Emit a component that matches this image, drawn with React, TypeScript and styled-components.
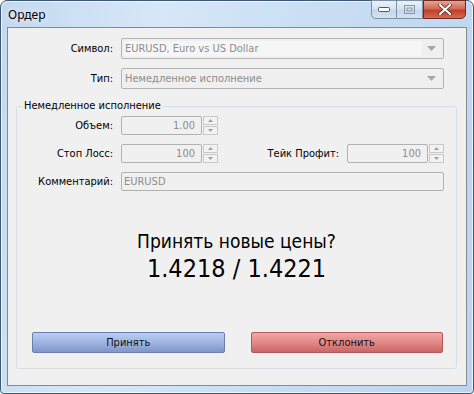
import React from 'react';
import styled, { createGlobalStyle } from 'styled-components';

const Global = createGlobalStyle`
  html, body { margin: 0; padding: 0; background: #fff; }
  body { width: 474px; height: 394px; overflow: hidden; }
`;

const uiFont = `"DejaVu Sans Condensed", "DejaVu Sans", sans-serif`;

const Window = styled.div`
  box-sizing: border-box;
  width: 474px;
  height: 394px;
  display: flex;
  flex-direction: column;
  border: 1px solid #3d5770;
  border-radius: 7px 7px 4px 4px;
  background: linear-gradient(100deg, #c4d9ef 0%, #d6e7f8 30%, #c9def3 60%, #bcd4ee 100%);
  box-shadow: inset 0 0 0 1px rgba(255,255,255,0.65);
  padding: 0 6px 7px 6px;
`;

const TitleBar = styled.div`
  height: 26px;
  display: flex;
  align-items: flex-start;
  justify-content: space-between;
`;

const Title = styled.div`
  font-family: "Noto Sans", "Open Sans", sans-serif;
  font-size: 12px;
  color: #000;
  padding: 5px 0 0 1px;
  text-shadow: 0 0 6px rgba(255,255,255,0.9);
`;

const Caption = styled.div`
  display: flex;
  margin-right: 1px;
  margin-top: -1px;
`;

const CapBtn = styled.div<{ $close?: boolean; $first?: boolean }>`
  box-sizing: border-box;
  height: 19px;
  width: ${p => (p.$close ? '43px' : '26px')};
  display: flex;
  align-items: center;
  justify-content: center;
  border: 1px solid ${p => (p.$close ? '#6b2a23' : '#7d8fa3')};
  border-left-width: ${p => (p.$first || p.$close ? '1px' : '0')};
  border-radius: ${p => (p.$close ? '0 0 5px 0' : p.$first ? '0 0 0 5px' : '0')};
  background: ${p =>
    p.$close
      ? 'linear-gradient(#e8a493 0%, #d26a55 45%, #c1402a 55%, #d56a4f 100%)'
      : 'linear-gradient(#e9f1fa 0%, #d6e4f3 45%, #c4d6ea 55%, #d4e3f2 100%)'};
`;

const Client = styled.div`
  flex: 1;
  display: flex;
  flex-direction: column;
  border: 1px solid #848a92;
  background: #f0f0f0;
  padding: 10px 22px 16px 0;
  font-family: ${uiFont};
  font-size: 11px;
  color: #000;
`;

const Row = styled.div<{ $label: number }>`
  display: grid;
  grid-template-columns: ${p => p.$label}px 1fr;
  column-gap: 8px;
  align-items: center;
  margin-bottom: 9px;
`;

const Label = styled.div`
  text-align: right;
  white-space: nowrap;
`;

const Combo = styled.div`
  box-sizing: border-box;
  height: 21px;
  border: 1px solid #b4b4b4;
  border-radius: 2px;
  background: #efefef;
  display: flex;
  align-items: center;
  padding: 2px;
`;

const ComboText = styled.div<{ $hl?: boolean }>`
  flex: 1;
  height: 100%;
  display: flex;
  align-items: center;
  padding-left: 1px;
  color: #8d8d8d;
  background: ${p => (p.$hl ? '#f6f6f6' : 'transparent')};
`;

const Arrow = styled.div`
  width: 19px;
  display: flex;
  justify-content: center;
`;

const Group = styled.div`
  position: relative;
  margin: 8px -13px 0 8px;
  flex: 1;
  display: flex;
  flex-direction: column;
  border: 1px solid #d5dfe5;
  border-radius: 3px;
  padding: 9px 12px 15px 0;
`;

const Legend = styled.div`
  position: absolute;
  top: -8px;
  left: 6px;
  padding: 0 2px 0 1px;
  background: #f0f0f0;
`;

const Fields = styled.div`
  display: flex;
  flex-direction: column;
`;

const Pair = styled.div`
  display: flex;
  align-items: center;
`;

const Input = styled.div<{ $w?: number; $right?: boolean }>`
  box-sizing: border-box;
  height: 19px;
  width: ${p => (p.$w ? `${p.$w}px` : 'auto')};
  flex: ${p => (p.$w ? 'none' : '1')};
  border: 1px solid #b1b1b1;
  border-radius: 2px;
  background: #f0f0f0;
  color: #8d8d8d;
  display: flex;
  align-items: center;
  justify-content: ${p => (p.$right ? 'flex-end' : 'flex-start')};
  padding: 0 6px 0 2px;
`;

const Spin = styled.div`
  display: flex;
  flex-direction: column;
  margin-left: 1px;
`;

const SpinBtn = styled.div`
  box-sizing: border-box;
  width: 15px;
  height: 9px;
  border: 1px solid #c9c9c9;
  background: #f2f2f2;
  display: flex;
  align-items: center;
  justify-content: center;
  & + & { margin-top: 1px; }
`;

const Message = styled.div`
  margin-top: 29px;
  padding-left: 12px;
  display: flex;
  flex-direction: column;
  align-items: center;
  font-family: "DejaVu Sans Condensed", "DejaVu Sans", sans-serif;
`;

const Question = styled.div`
  font-size: 19px;
  line-height: 24px;
`;

const Prices = styled.div`
  font-size: 25px;
  line-height: 32px;
`;

const Buttons = styled.div`
  margin-top: auto;
  display: grid;
  grid-template-columns: 1fr 1fr;
  column-gap: 26px;
  padding: 0 1px 0 15px;
`;

const Btn = styled.div<{ $tone: 'blue' | 'red' }>`
  box-sizing: border-box;
  height: 21px;
  display: flex;
  align-items: center;
  justify-content: center;
  border-radius: 2px;
  border: 1px solid ${p => (p.$tone === 'blue' ? '#6c7fae' : '#b25a5a')};
  background: ${p =>
    p.$tone === 'blue'
      ? 'linear-gradient(#b8cdf5 0%, #9fb4e2 50%, #7f96c6 100%)'
      : 'linear-gradient(#f6a5a5 0%, #e28888 50%, #c96767 100%)'};
  color: #111;
`;

const TriDown = ({ c = '#a7a7a7' }: { c?: string }) => (
  <svg width="9" height="5" viewBox="0 0 9 5"><path d="M0 0h9L4.5 5z" fill={c} /></svg>
);

const SmallTri = ({ up }: { up?: boolean }) => (
  <svg width="5" height="3" viewBox="0 0 5 3">
    <path d={up ? 'M0 3h5L2.5 0z' : 'M0 0h5L2.5 3z'} fill="#a0a0a0" />
  </svg>
);

const Spinner = () => (
  <Spin>
    <SpinBtn><SmallTri up /></SpinBtn>
    <SpinBtn><SmallTri /></SpinBtn>
  </Spin>
);

export default function App() {
  return (
    <>
      <Global />
      <Window>
        <TitleBar>
          <Title>Ордер</Title>
          <Caption>
            <CapBtn $first>
              <svg width="12" height="5" viewBox="0 0 12 5">
                <rect x="0.5" y="0.5" width="11" height="4" fill="#fff" stroke="#4a5a6e" rx="1" />
              </svg>
            </CapBtn>
            <CapBtn>
              <svg width="11" height="9" viewBox="0 0 11 9">
                <rect x="0.5" y="0.5" width="10" height="8" fill="none" stroke="#8a96a6" />
                <rect x="3" y="3" width="5" height="3" fill="none" stroke="#8a96a6" />
              </svg>
            </CapBtn>
            <CapBtn $close>
              <svg width="14" height="11" viewBox="0 0 14 11">
                <path d="M2 1l10 9M12 1L2 10" stroke="#5a2018" strokeWidth="3.6" strokeLinecap="round" />
                <path d="M2 1l10 9M12 1L2 10" stroke="#fff" strokeWidth="2.2" strokeLinecap="round" />
              </svg>
            </CapBtn>
          </Caption>
        </TitleBar>
        <Client>
          <Row $label={105}>
            <Label>Символ:</Label>
            <Combo>
              <ComboText $hl>EURUSD, Euro vs US Dollar</ComboText>
              <Arrow><TriDown /></Arrow>
            </Combo>
          </Row>
          <Row $label={105}>
            <Label>Тип:</Label>
            <Combo>
              <ComboText>Немедленное исполнение</ComboText>
              <Arrow><TriDown /></Arrow>
            </Combo>
          </Row>
          <Group>
            <Legend>Немедленное исполнение</Legend>
            <Fields>
              <Row $label={96}>
                <Label>Объем:</Label>
                <Pair>
                  <Input $w={81} $right>1.00</Input>
                  <Spinner />
                </Pair>
              </Row>
              <Row $label={96}>
                <Label>Стоп Лосс:</Label>
                <Pair>
                  <Input $w={81} $right>100</Input>
                  <Spinner />
                  <Label style={{ flex: 1 }}>Тейк Профит:</Label>
                  <Input $w={81} $right style={{ marginLeft: 8 }}>100</Input>
                  <Spinner />
                </Pair>
              </Row>
              <Row $label={96}>
                <Label>Комментарий:</Label>
                <Input>EURUSD</Input>
              </Row>
            </Fields>
            <Message>
              <Question>Принять новые цены?</Question>
              <Prices>1.4218 / 1.4221</Prices>
            </Message>
            <Buttons>
              <Btn $tone="blue">Принять</Btn>
              <Btn $tone="red">Отклонить</Btn>
            </Buttons>
          </Group>
        </Client>
      </Window>
    </>
  );
}
